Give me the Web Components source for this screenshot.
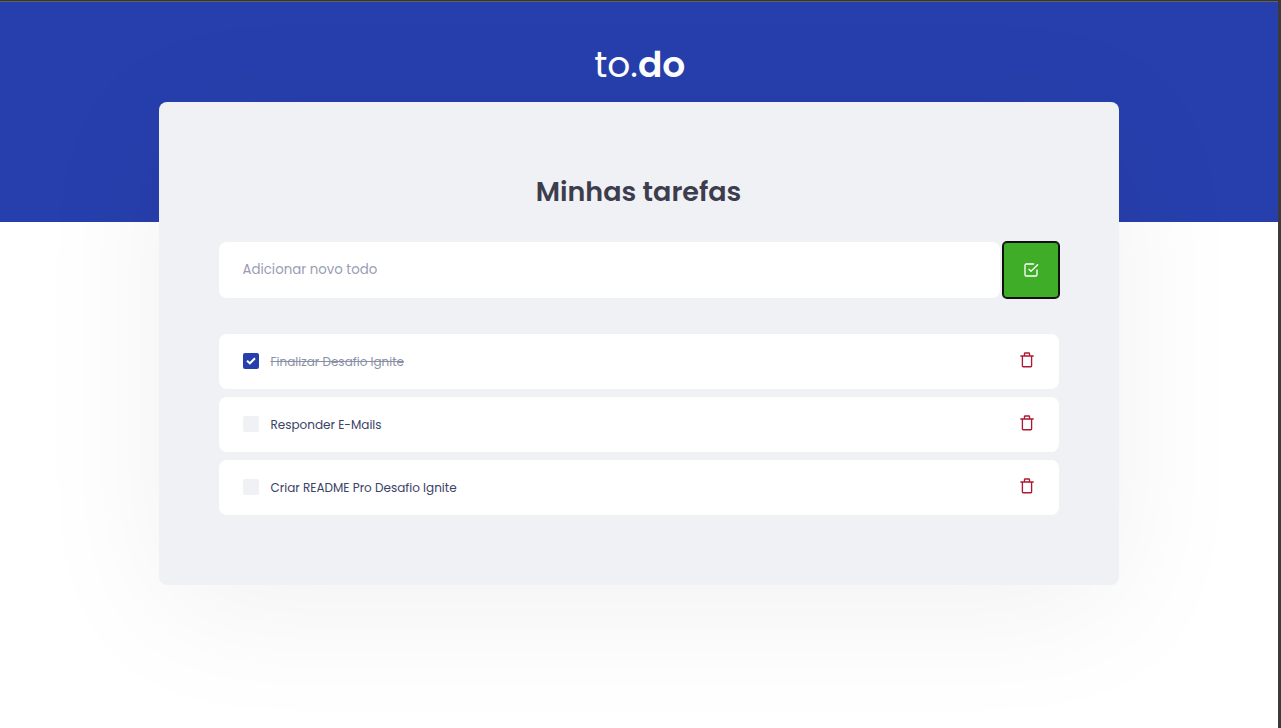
<!DOCTYPE html>
<html lang="pt-BR"><head><meta charset="utf-8"><title>to.do</title>
<style>html,body{margin:0;height:100%;overflow:hidden;background:#fff}body{font-family:Poppins,Inter,"Open Sans",sans-serif}</style></head>
<body>
<todo-app></todo-app>
<script>
const define=(name,html)=>{
  const t=document.createElement('template');t.innerHTML=html;
  customElements.define(name,class extends HTMLElement{
    constructor(){super();this.attachShadow({mode:'open'}).append(t.content.cloneNode(true));}
  });
};
define('todo-header',`<style>
:host{display:flex;justify-content:center;box-sizing:border-box;height:220px;background:#273fad;color:#fff;padding:36px 0 0 1.5px}
div{height:54px;line-height:54px;font-size:36px;white-space:nowrap}
.a{font-weight:400}.b{font-weight:600}
</style><div><span class="a">to.</span><span class="b">do</span></div>`);
define('todo-form',`<style>
:host{display:flex;gap:3px;height:56px}
.field{flex:1;display:flex;align-items:center;box-sizing:border-box;padding:0 23.5px;border-radius:8px;background:#fff;color:#9a9cb6;font-size:13.333px}
button{width:56px;height:56px;box-sizing:border-box;border:0;border-radius:4px;padding:0;background:#3fad27;color:#fff;display:flex;align-items:center;justify-content:center;box-shadow:inset 0 0 0 1px #101010,0 0 0 1px #101010}
svg{display:block}
</style><div class="field"><span><slot></slot></span></div>
<button aria-label="Adicionar"><svg width="16" height="16" viewBox="0 0 24 24" fill="none" stroke="currentColor" stroke-width="2" stroke-linecap="round" stroke-linejoin="round"><path d="M9 11l3 3L22 4"/><path d="M21 12v7a2 2 0 0 1-2 2H5a2 2 0 0 1-2-2V5a2 2 0 0 1 2-2h11"/></svg></button>`);
define('todo-item',`<style>
:host{display:flex;align-items:center;box-sizing:border-box;height:55px;padding:0 24px;border-radius:8px;background:#fff;color:#3b4266;font-size:12px}
.box{width:16px;height:16px;border-radius:2px;background:#f0f1f5;margin:-1px 11.5px 0 0;display:flex;align-items:center;justify-content:center}
.box svg{display:none}
:host([done]) .box{background:#273fad}:host([done]) .box svg{display:block}
.label{flex:1;white-space:nowrap}
:host([done]) .label span{text-decoration:line-through;color:#8b8fa5}
.trash{margin-top:-3px;display:block}
</style><div class="box"><svg width="10" height="8" viewBox="0 0 10 8" fill="none" stroke="#fff" stroke-width="2"><path d="M1 3.7 3.9 6.3 9 1.3"/></svg></div>
<div class="label"><span><slot></slot></span></div>
<svg class="trash" width="16" height="16" viewBox="0 0 24 24" fill="none" stroke="#ae1834" stroke-width="2" stroke-linejoin="round"><path d="M2 6h20M5.1 6v15.1a1 1 0 0 0 1 1h11.8a1 1 0 0 0 1-1V6M8.2 6V2.5a1 1 0 0 1 1-1h5.6a1 1 0 0 1 1 1V6"/></svg>`);
define('todo-panel',`<style>
:host{display:block;box-sizing:border-box;position:relative;width:960px;height:483px;margin:-120px auto 0;padding:69px 60px 0;border-radius:8px;background:#f0f1f5;box-shadow:0 24px 140px rgba(0,0,0,.06)}
h2{margin:0 0 29px;height:42px;line-height:42px;padding-right:1px;text-align:center;font-size:27px;font-weight:600;color:#3d3d4d}
.list{display:grid;gap:8px;margin-top:36px}
</style><h2>Minhas tarefas</h2><todo-form>Adicionar novo todo</todo-form>
<div class="list"><todo-item done>Finalizar Desafio Ignite</todo-item><todo-item>Responder E-Mails</todo-item><todo-item>Criar README Pro Desafio Ignite</todo-item></div>`);
define('todo-app',`<style>
:host{display:block;box-sizing:border-box;width:1281px;height:728px;background:#fff;border-top:1px solid #363636;border-right:3px solid #3a3a3a;overflow:hidden}
.view{border-top:1px solid #606060;height:727px;box-sizing:border-box;overflow:hidden}
</style><div class="view"><todo-header></todo-header><todo-panel></todo-panel></div>`);
</script></body></html>
